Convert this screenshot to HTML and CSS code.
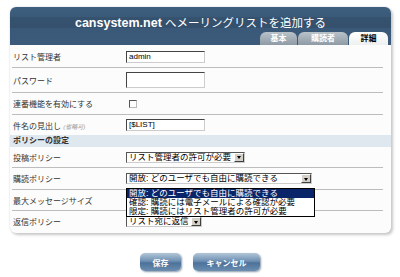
FILE: index.html
```html
<!DOCTYPE html>
<html lang="ja">
    <head>
        <meta charset="UTF-8" />
        <title>メーリングリストを追加</title>
        <link rel="stylesheet" href="styles.css">
    </head>
    <body>
        <div class="page">
            <div class="panel">
                <div class="panel-head">
                    <h1 class="title"><b>cansystem.net</b> へメーリングリストを追加する</h1>
                    <ul class="tabs">
                        <li class="tab tab-1">基本</li>
                        <li class="tab tab-2">購読者</li>
                        <li class="tab tab-3 tab-active">詳細</li>
                    </ul>
                </div>

                <div class="panel-body">
                    <div class="row row-1">
                        <span class="label">リスト管理者</span>
                        <span class="text text-short">admin</span>
                    </div>
                    <div class="row row-2">
                        <span class="label">パスワード</span>
                        <span class="text text-tall"></span>
                    </div>
                    <div class="row row-3">
                        <span class="label">連番機能を有効にする</span>
                        <span class="check"></span>
                    </div>
                    <div class="row row-4 no-line">
                        <span class="label">件名の見出し <i class="hint">(省略可)</i></span>
                        <span class="text text-short">[$LIST]</span>
                    </div>

                    <div class="section">ポリシーの設定</div>

                    <div class="row row-5">
                        <span class="label">投稿ポリシー</span>
                        <span class="select select-post">リスト管理者の許可が必要<span class="arrow"></span></span>
                    </div>
                    <div class="row row-6">
                        <span class="label">購読ポリシー</span>
                        <span class="select select-sub">開放: どのユーザでも自由に購読できる<span class="arrow"></span>
                            <ul class="dropdown">
                                <li class="option option-on">開放: どのユーザでも自由に購読できる</li>
                                <li class="option">確認: 購読には電子メールによる確認が必要</li>
                                <li class="option">限定: 購読にはリスト管理者の許可が必要</li>
                            </ul>
                        </span>
                    </div>
                    <div class="row row-7">
                        <span class="label">最大メッセージサイズ</span>
                    </div>
                    <div class="row row-8 no-line">
                        <span class="label">返信ポリシー</span>
                        <span class="select select-reply">リスト宛に返信<span class="arrow"></span></span>
                    </div>
                </div>
            </div>

            <div class="buttons">
                <button class="btn btn-save">保存</button>
                <button class="btn btn-cancel">キャンセル</button>
            </div>
        </div>
    </body>
</html>
```

FILE: styles.css
```css
* {
    box-sizing: border-box;
    font-family: "Liberation Sans", "Noto Sans CJK JP", sans-serif;
}
body {
    margin: 0;
    background: #fff;
}
.page {
    width: 400px;
    height: 277px;
    padding: 7px 10px 0 10px;
}
.panel {
    width: 381px;
    height: 226px;
    background: #fbfcfb;
    border-radius: 6px;
    box-shadow: 2px 2px 3px #c8c8c8, 0 0 2px #d0d0d0;
}
.panel-head {
    position: relative;
    height: 38px;
    border-radius: 6px 6px 0 0;
    background: linear-gradient(#3f5f80, #3b5a79 25%, #35526f 26%, #34506d 55%, #3a5877 56%, #3c5b7a);
}
.title {
    margin: 0;
    padding-top: 9px;
    text-align: center;
    font-size: 11.5px;
    font-weight: normal;
    line-height: 14px;
    color: #fff;
}
.title b {
    font-weight: bold;
    font-size: 12.5px;
}
.tabs {
    position: absolute;
    right: 3px;
    bottom: 0;
    margin: 0;
    padding: 0;
    list-style: none;
    display: flex;
    gap: 1px;
}
.tab {
    height: 13px;
    font-size: 8px;
    font-weight: bold;
    line-height: 13px;
    text-align: center;
    color: #fff;
    border-radius: 6px 6px 0 0;
    background: linear-gradient(#b9c2c9, #8e9aa5);
}
.tab-1 {
    width: 37px;
}
.tab-2 {
    width: 50px;
}
.tab-3 {
    width: 39px;
}
.tab-active {
    color: #000;
    background: linear-gradient(#ffffff, #eef0f0);
}
.panel-body {
    padding: 1px 0 0 0;
}
.row {
    display: flex;
    align-items: center;
    margin: 0 8px 0 2px;
    border-bottom: 1px solid #bdbdbd;
    font-size: 8px;
    color: #333;
}
.no-line {
    border-bottom: none;
}
.row-1 {
    height: 22px;
}
.row-2 {
    height: 25px;
}
.row-3 {
    height: 22px;
}
.row-4 {
    height: 20px;
}
.row-5 {
    height: 21px;
}
.row-6 {
    height: 22px;
}
.row-7 {
    height: 21px;
}
.row-8 {
    height: 20px;
    padding-top: 1px;
}
.label {
    width: 114px;
    padding-left: 1px;
    white-space: nowrap;
}
.hint {
    font-size: 6px;
    color: #999;
}
.text {
    display: block;
    width: 79px;
    padding: 0 2px;
    background: #fff;
    border: 1px solid #ccc;
    border-top-color: #444;
    border-left-color: #444;
    font-size: 8px;
    color: #000;
}
.text-short {
    height: 12px;
    line-height: 10px;
}
.text-tall {
    height: 16px;
}
.check {
    display: block;
    width: 8px;
    height: 8px;
    margin-left: 3px;
    background: #fff;
    border: 1px solid #555;
    border-right-color: #bbb;
    border-bottom-color: #bbb;
}
.section {
    height: 12px;
    padding-left: 3px;
    background: #dfe8ee;
    font-size: 8px;
    font-weight: bold;
    line-height: 12px;
    color: #333;
}
.select {
    position: relative;
    display: block;
    height: 11px;
    padding: 0 12px 0 2px;
    background: #fff;
    border: 1px solid #555;
    border-right-color: #ccc;
    border-bottom-color: #ccc;
    font-size: 8.5px;
    line-height: 9px;
    color: #000;
    white-space: nowrap;
}
.select-post {
    width: 119px;
}
.select-sub {
    width: 186px;
}
.select-reply {
    width: 76px;
}
.arrow {
    position: absolute;
    right: 0;
    top: 0;
    width: 10px;
    height: 9px;
    background: #d4d0c8;
    border: 1px solid #fff;
    border-right-color: #404040;
    border-bottom-color: #404040;
}
.arrow::after {
    content: "";
    position: absolute;
    left: 1.5px;
    top: 2.5px;
    border-left: 2.5px solid transparent;
    border-right: 2.5px solid transparent;
    border-top: 3px solid #000;
}
.dropdown {
    position: absolute;
    left: -1px;
    top: 14px;
    z-index: 2;
    width: 189px;
    margin: 0;
    padding: 0;
    list-style: none;
    background: #fff;
    border: 1px solid #000;
}
.option {
    height: 9px;
    padding-left: 2px;
    font-size: 8.5px;
    line-height: 9px;
    color: #000;
    white-space: nowrap;
}
.option-on {
    background: #0a246a;
    color: #fff;
}
.buttons {
    display: flex;
    justify-content: center;
    gap: 12px;
    margin-top: 20px;
}
.btn {
    height: 18px;
    padding: 0;
    border: none;
    border-radius: 5px;
    font-size: 8px;
    font-weight: bold;
    color: #fff;
    background: linear-gradient(#b3c6d8, #6d8fb2 45%, #4d729a 55%, #6a8db0);
    box-shadow: 1px 1px 2px #8a9aa8;
    cursor: pointer;
}
.btn-save {
    width: 41px;
}
.btn-cancel {
    width: 67px;
}
```
